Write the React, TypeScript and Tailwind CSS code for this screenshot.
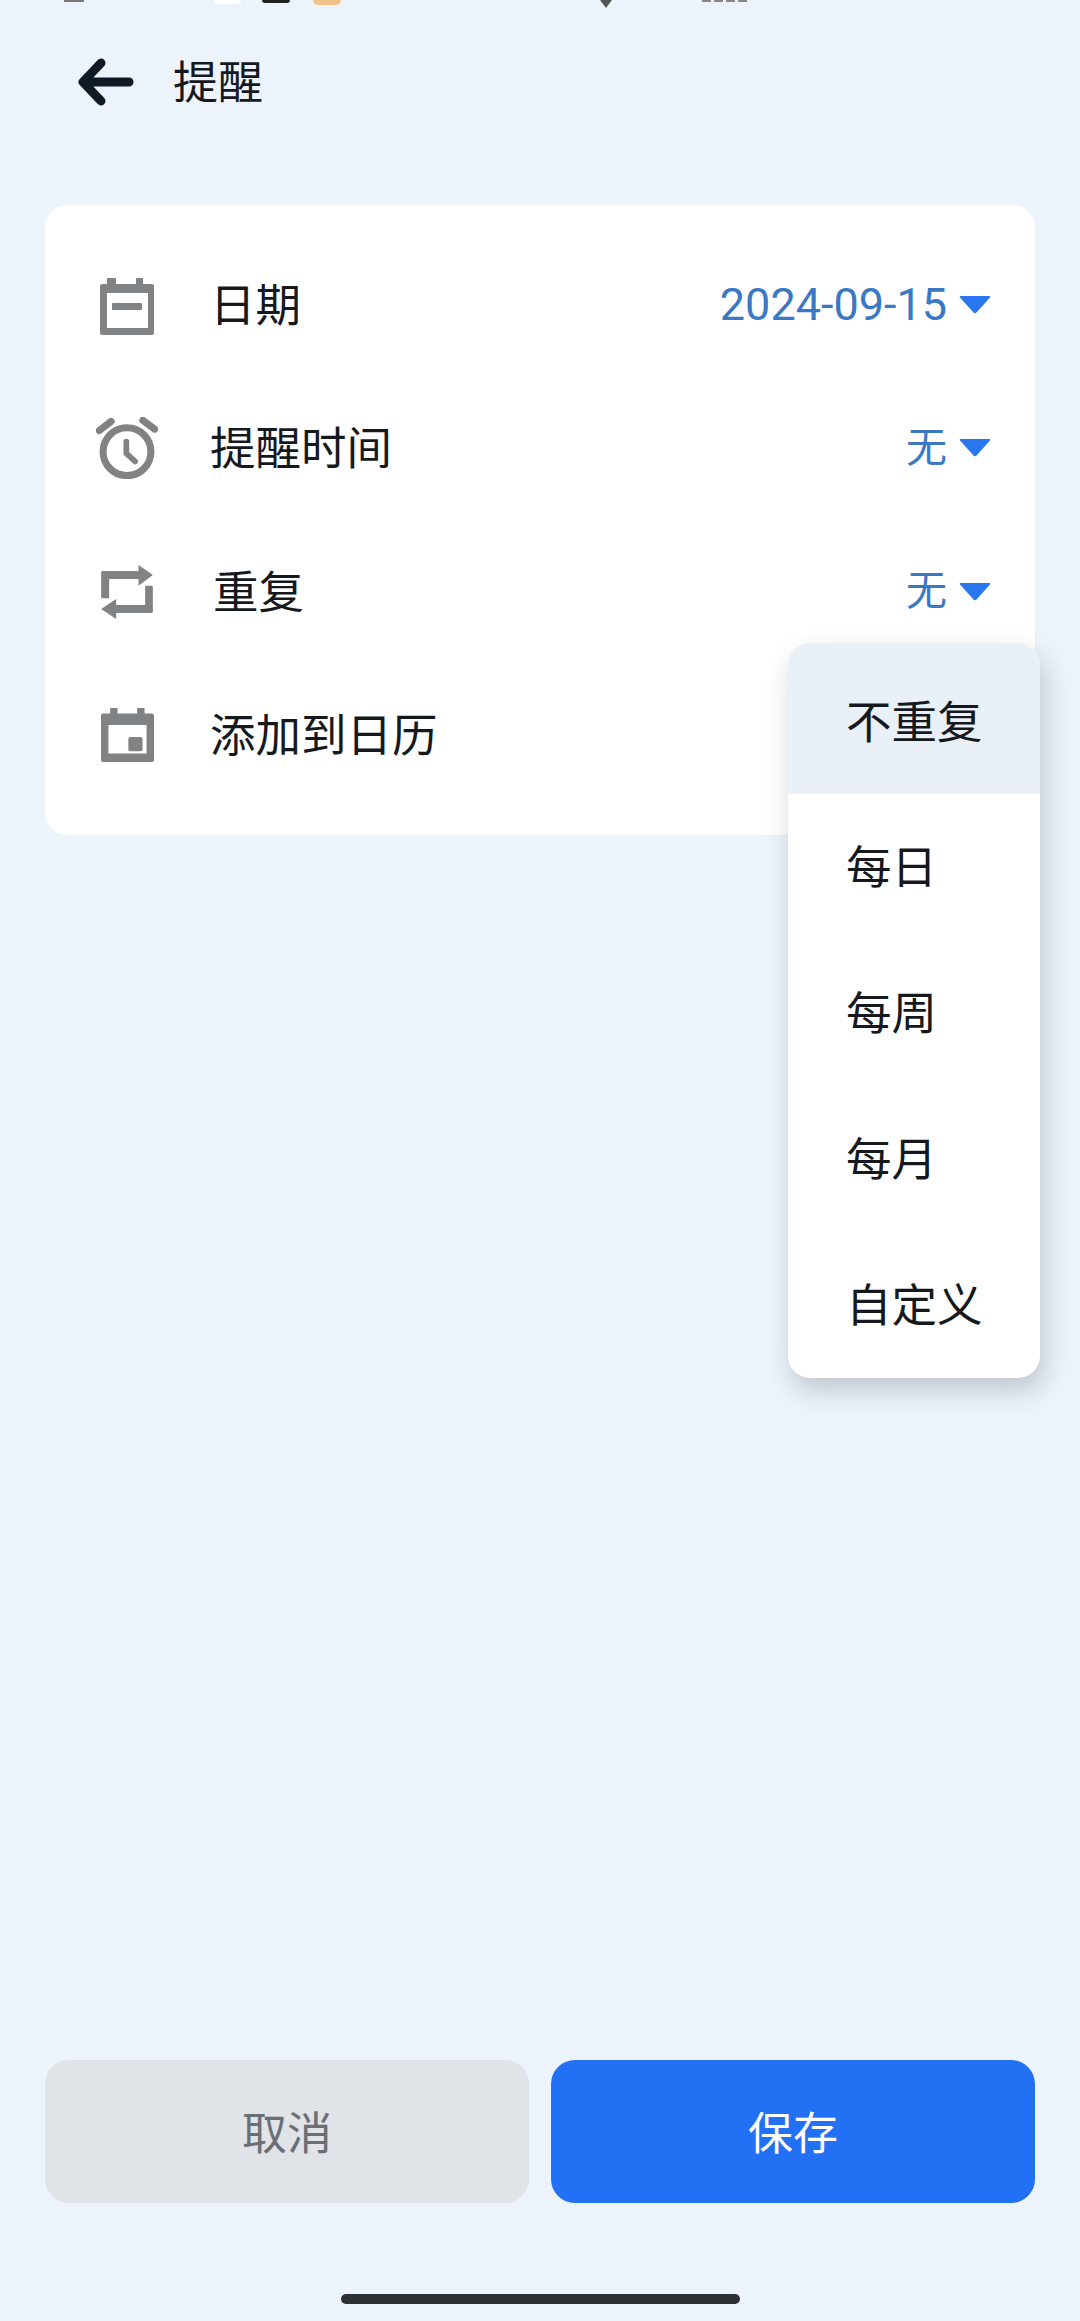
import React from "react";

const cjk = "font-['Noto_Sans_CJK_SC','Noto_Sans',sans-serif]";

function CalendarDash() {
  return (
    <svg width="62" height="62" viewBox="0 0 62 62" fill="#808283">
      <path fillRule="evenodd" d="M11 4h9v6h20V4h7v6h9a2 2 0 0 1 2 2v47a2 2 0 0 1-2 2H6a2 2 0 0 1-2-2V12a2 2 0 0 1 2-2h5zM11 19v35h41V19z" />
      <rect x="16" y="29" width="30" height="7" rx="1" />
    </svg>
  );
}

function Alarm() {
  return (
    <svg width="62" height="62" viewBox="168 682 184 184" fill="none" stroke="#808283" strokeLinecap="round" strokeLinejoin="round">
      <circle cx="260" cy="785" r="71" strokeWidth="21" />
      <path d="M178 722L213 695M307 692L342 718" strokeWidth="21" />
      <path d="M258 755V790L284 814" strokeWidth="17" />
    </svg>
  );
}

function Repeat() {
  return (
    <svg width="52" height="54" viewBox="183 160 155 162" fill="#808283">
      <path d="M187 178H295V160L338 190L295 222V202H207V256a4 4 0 0 1-4 4H187a4 4 0 0 1-4-4V182a4 4 0 0 1 4-4z" />
      <path d="M334 304H228V322L183 292L228 262V280H315V226a4 4 0 0 1 4-4H334a4 4 0 0 1 4 4V300a4 4 0 0 1-4 4z" />
    </svg>
  );
}

function CalendarSquare() {
  return (
    <svg width="53" height="54" viewBox="183 590 157 160" fill="#808283">
      <path fillRule="evenodd" d="M210 590H232V606H290V590H312V606H334a6 6 0 0 1 6 6V744a6 6 0 0 1-6 6H189a6 6 0 0 1-6-6V612a6 6 0 0 1 6-6H210zM205 640V725H318V640z" />
      <rect x="264" y="676" width="42" height="42" rx="6" />
    </svg>
  );
}

function Caret() {
  return (
    <svg width="32" height="18" viewBox="0 0 32 18" fill="#2a76ee" className="shrink-0">
      <path d="M1 1.5C.3.8.8 0 1.6 0h28.8c.8 0 1.3.8.6 1.5L17.5 16.5c-.8.9-2.2.9-3 0z" />
    </svg>
  );
}

function Row({
  icon,
  label,
  value,
  labelClass,
  valueClass,
}: {
  icon: React.ReactNode;
  label: string;
  value?: string;
  labelClass: string;
  valueClass?: string;
}) {
  return (
    <div className="flex h-[143.5px] items-center pr-[44px] pl-[51px]">
      <div className="flex w-[62px] justify-center">{icon}</div>
      <div className={`flex-1 pb-[5px] text-[45.5px] leading-none text-[#15191e] ${labelClass}`}>{label}</div>
      {value && (
        <div className="flex items-center gap-[12px]">
          <span className={`font-['Roboto','Noto_Sans_CJK_SC',sans-serif] leading-none text-[#3a78c4] ${valueClass}`}>{value}</span>
          <Caret />
        </div>
      )}
    </div>
  );
}

const menu = ["每日", "每周", "每月", "自定义"];

export default function App() {
  return (
    <div className={`flex h-[2321px] w-[1080px] flex-col overflow-hidden bg-[#ecf3fa] ${cjk}`}>
      <div className="flex h-[10px] items-start">
        <div className="ml-[64px] h-[2px] w-[20px] bg-[#777]" />
        <div className="ml-[129px] h-[4px] w-[28px] rounded-b-full bg-white" />
        <div className="ml-[21px] h-[3px] w-[28px] rounded-b-full bg-[#222]" />
        <div className="ml-[23px] h-[5px] w-[28px] rounded-b-full bg-[#eec48a]" />
        <div className="ml-[259px] h-0 w-0 border-x-[6px] border-t-[8px] border-x-transparent border-t-[#555]" />
        <div className="ml-[90px] flex gap-[3px]">
          <div className="h-[2px] w-[9px] bg-[#888]" />
          <div className="h-[2px] w-[9px] bg-[#888]" />
          <div className="h-[2px] w-[9px] bg-[#888]" />
          <div className="h-[2px] w-[9px] bg-[#888]" />
        </div>
      </div>

      <div className="flex h-[145px] items-center pb-[2px] pl-[78px]">
        <svg width="56" height="48" viewBox="0 0 56 48" fill="none" stroke="#101a26" strokeWidth="9" strokeLinecap="round" strokeLinejoin="round">
          <path d="M51 24H6M23 5L5 24L23 43" />
        </svg>
        <div className="ml-[39px] pb-[4px] text-[45px] leading-none text-[#15191e]">提醒</div>
      </div>

      <div className="relative mx-[45px] mt-[50px] rounded-[22px] bg-white py-[28px]">
        <Row icon={<CalendarDash />} label="日期" value="2024-09-15" labelClass="ml-[52px]" valueClass="text-[45px]" />
        <Row icon={<Alarm />} label="提醒时间" value="无" labelClass="ml-[52px]" valueClass="text-[41px]" />
        <Row icon={<Repeat />} label="重复" value="无" labelClass="ml-[55px]" valueClass="text-[41px]" />
        <Row icon={<CalendarSquare />} label="添加到日历" labelClass="ml-[52px]" />

        <div className="absolute top-[438px] right-[-5px] w-[252px] rounded-[22px] bg-white shadow-[4px_12px_26px_0px_rgba(50,60,75,0.24)]">
          <div className="flex h-[151px] items-center rounded-t-[22px] bg-[#e9f0f8] pt-[2px] pl-[58px] text-[45.5px] leading-none text-[#15191e]">
            不重复
          </div>
          {menu.map((item) => (
            <div key={item} className="flex h-[146px] items-center pb-[4px] pl-[58px] text-[45.5px] leading-none text-[#15191e]">
              {item}
            </div>
          ))}
        </div>
      </div>

      <div className="mt-auto flex gap-[22px] px-[45px]">
        <button className="flex h-[143px] flex-1 items-center justify-center rounded-[24px] bg-[#e0e3e8] pb-[3px] text-[45px] leading-none text-[#6a6f76]">
          取消
        </button>
        <button className="flex h-[143px] flex-1 items-center justify-center rounded-[24px] bg-[#2271f5] pb-[3px] text-[45px] leading-none text-white">
          保存
        </button>
      </div>

      <div className="mt-[91px] mb-[17px] h-[10px] w-[399px] self-center rounded-full bg-[#2c2f33]" />
    </div>
  );
}
